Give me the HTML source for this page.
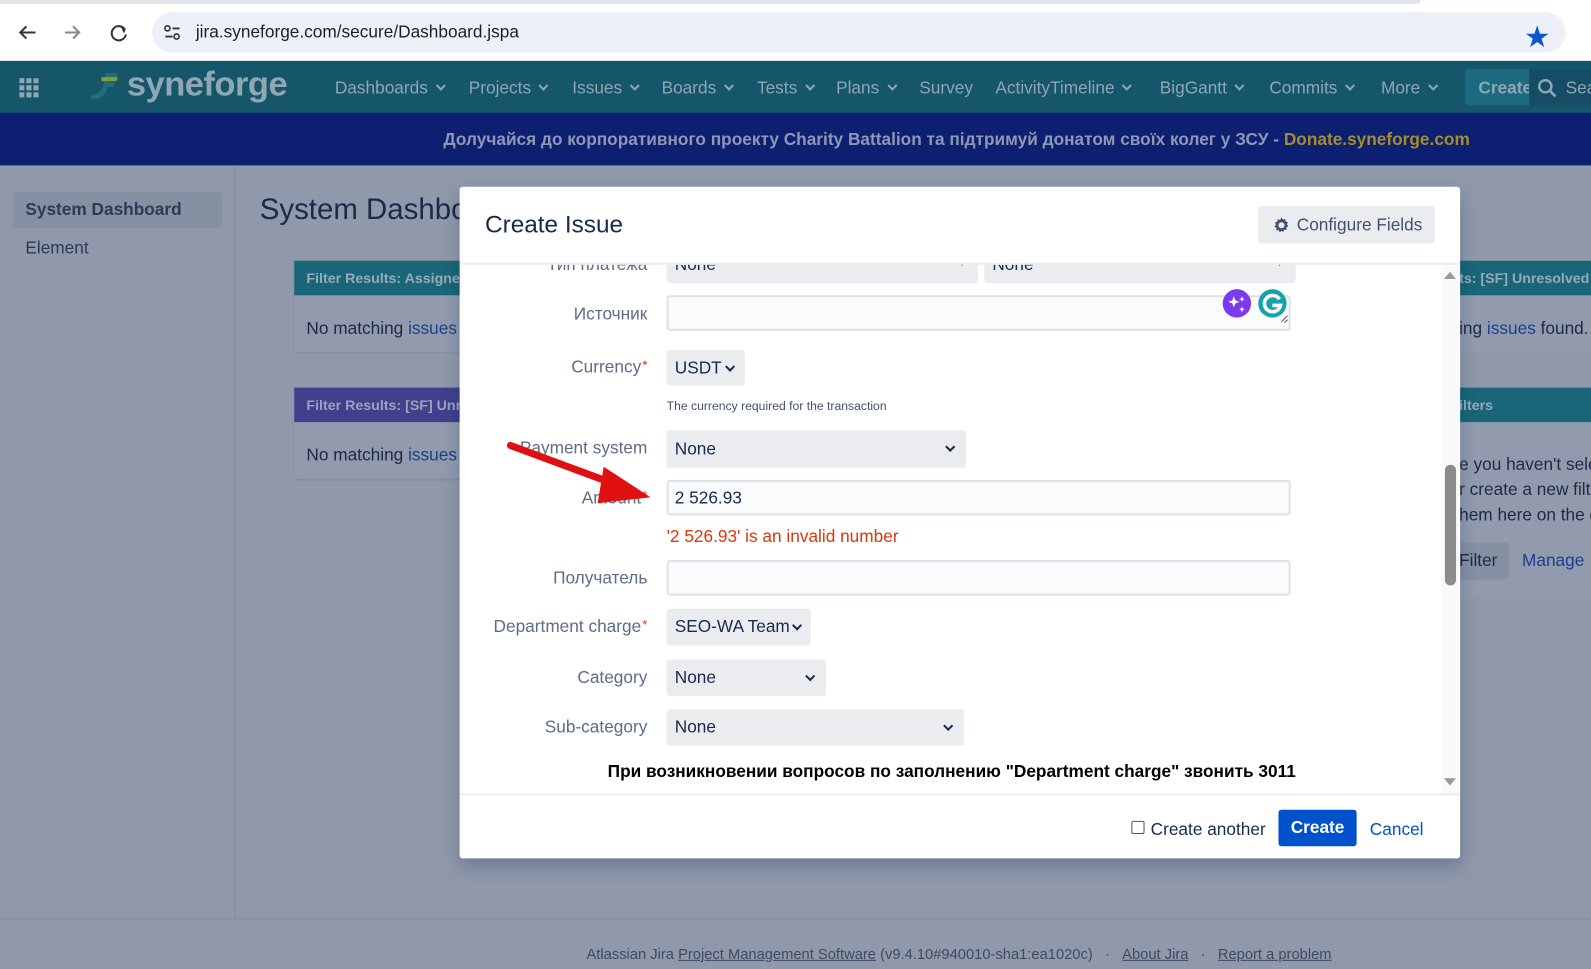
<!DOCTYPE html>
<html><head><meta charset="utf-8">
<style>
*{box-sizing:border-box;margin:0;padding:0}
html,body{width:1591px;height:969px;overflow:hidden;background:#8f99aa;font-family:"Liberation Sans","Noto Sans CJK SC",sans-serif}
#w{position:absolute;left:0;top:0;width:1568px;height:955px;transform:scale(1.01467);transform-origin:0 0;background:#8f99aa}
.a{position:absolute}
.nav span{position:absolute;top:77px;font-size:17px;color:#8fa6b3;white-space:nowrap}
.chev{display:inline-block;width:7px;height:7px;border-right:2px solid currentColor;border-bottom:2px solid currentColor;transform:rotate(45deg);margin-left:9px;position:relative;top:-4px}
.lbl{position:absolute;right:930px;font-size:17px;color:#5e6c84;text-align:right;white-space:nowrap}
.req{color:#de350b;font-size:13px;vertical-align:top;margin-left:1px}
.sel{position:absolute;background:#ebecf0;border-radius:3px;font-size:17px;color:#172b4d;padding-left:8px;line-height:36px;height:36px}
.sel .chev{position:absolute;right:12px;top:13px;margin:0;width:7px;height:7px;color:#172b4d}
.inp{position:absolute;left:657px;width:615px;height:36px;background:#fafbfc;border:2px solid #dfe1e6;border-radius:3px;font-size:17px;color:#172b4d;padding-left:6px;line-height:32px}
</style></head><body><div id="w">
<div class="a" style="left:0;top:0;width:1568px;height:60px;background:#fff"></div>
<div class="a" style="left:0;top:0;width:1400px;height:4px;background:#e1e5ea;border-radius:0 0 8px 0"></div>
<svg class="a" style="left:15px;top:20px" width="120" height="24" viewBox="0 0 120 24"><path d="M20 12H5M11 6l-6 6 6 6" stroke="#333" stroke-width="2" fill="none"/><path d="M49 12h14M57 6l6 6-6 6" stroke="#888" stroke-width="2" fill="none"/><path d="M108 9a7 7 0 1 0 1 5" stroke="#333" stroke-width="2" fill="none"/><path d="M104 6l5 3-2 4z" fill="#333"/></svg>
<div class="a" style="left:150px;top:12px;width:1393px;height:40px;background:#edf0f8;border-radius:20px"></div>
<svg class="a" style="left:160px;top:22px" width="20" height="20"><circle cx="5" cy="6" r="2.5" stroke="#333" stroke-width="1.6" fill="none"/><path d="M10 6h7M3 14h7" stroke="#333" stroke-width="1.8"/><circle cx="14" cy="14" r="2.5" stroke="#333" stroke-width="1.6" fill="none"/></svg>
<div class="a" style="left:193px;top:22px;font-size:17px;color:#1f1f1f">jira.syneforge.com/secure/Dashboard.jspa</div>
<div class="a" style="left:1503px;top:17px;font-size:24px;color:#0b57d0">★</div>
<div class="a" style="left:0;top:60px;width:1568px;height:51px;background:#15566b"></div>
<svg class="a" style="left:19px;top:77px" width="22" height="20"><g fill="#8fa6b3"><rect x="0" y="0" width="5" height="5"/><rect x="7" y="0" width="5" height="5"/><rect x="14" y="0" width="5" height="5"/><rect x="0" y="7" width="5" height="5"/><rect x="7" y="7" width="5" height="5"/><rect x="14" y="7" width="5" height="5"/><rect x="0" y="14" width="5" height="5"/><rect x="7" y="14" width="5" height="5"/><rect x="14" y="14" width="5" height="5"/></g></svg>
<svg class="a" style="left:86px;top:68px" width="36" height="36"><path d="M4 26c6 0 10-4 12-10l2-12h12l-1 5h-7l-1 4h6l-1 5h-6c-2 8-7 12-16 12z" fill="#1e6f79"/><path d="M14 8h16l-1 4H14z" fill="#8a9a3a"/></svg>
<div class="a" style="left:125px;top:64px;font-size:34px;font-weight:bold;color:#8fa6b3;letter-spacing:-0.5px">syneforge</div>
<div class="nav">
<span style="left:330px">Dashboards<i class="chev"></i></span>
<span style="left:462px">Projects<i class="chev"></i></span>
<span style="left:564px">Issues<i class="chev"></i></span>
<span style="left:652px">Boards<i class="chev"></i></span>
<span style="left:746px">Tests<i class="chev"></i></span>
<span style="left:824px">Plans<i class="chev"></i></span>
<span style="left:906px">Survey</span>
<span style="left:981px">ActivityTimeline<i class="chev"></i></span>
<span style="left:1143px">BigGantt<i class="chev"></i></span>
<span style="left:1251px">Commits<i class="chev"></i></span>
<span style="left:1361px">More<i class="chev"></i></span>
</div>
<div class="a" style="left:1444px;top:68px;width:124px;height:36px;background:#1a6a80;border-radius:3px"></div>
<div class="a" style="left:1457px;top:77px;font-size:17px;font-weight:bold;color:#8fa6b3">Create</div>
<div class="a" style="left:1507px;top:68px;width:61px;height:36px;background:#164d66"></div>
<svg class="a" style="left:1515px;top:77px" width="20" height="20"><circle cx="8" cy="8" r="6" stroke="#8fa6b3" stroke-width="2.4" fill="none"/><path d="M12 12l6 6" stroke="#8fa6b3" stroke-width="2.6"/></svg>
<div class="a" style="left:1543px;top:77px;font-size:17px;color:#8fa6b3">Sea</div>
<div class="a" style="left:0;top:111px;width:1568px;height:52px;background:#0d1f70"></div>
<div class="a" style="left:437px;top:128px;font-size:17px;font-weight:bold;color:#8e97b4;white-space:nowrap">Долучайся до корпоративного проекту Charity Battalion та підтримуй донатом своїх колег у ЗСУ - <span style="color:#a58e2a">Donate.syneforge.com</span></div>
<div class="a" style="left:231px;top:163px;width:1px;height:742px;background:#818ba0"></div>
<div class="a" style="left:13px;top:189px;width:206px;height:36px;background:#8690a3;border-radius:3px"></div>
<div class="a" style="left:25px;top:197px;font-size:17px;font-weight:bold;color:#2d3a57">System Dashboard</div>
<div class="a" style="left:25px;top:235px;font-size:17px;color:#2d3a57">Element</div>
<div class="a" style="left:256px;top:191px;font-size:29px;color:#172b4d">System Dashbo</div>
<div class="a" style="left:290px;top:257px;width:170px;height:90px;background:#919bad;box-shadow:0 1px 2px #7d879a"></div>
<div class="a" style="left:290px;top:257px;width:170px;height:34px;background:#196679"></div>
<div class="a" style="left:302px;top:266px;font-size:14px;font-weight:bold;color:#9aa9b8">Filter Results: Assigned</div>
<div class="a" style="left:302px;top:314px;font-size:17px;color:#1e2a44">No matching <span style="color:#1c3f8f">issues</span></div>
<div class="a" style="left:290px;top:382px;width:170px;height:90px;background:#919bad;box-shadow:0 1px 2px #7d879a"></div>
<div class="a" style="left:290px;top:382px;width:170px;height:34px;background:#433f8d"></div>
<div class="a" style="left:302px;top:391px;font-size:14px;font-weight:bold;color:#9aa2bc">Filter Results: [SF] Unr</div>
<div class="a" style="left:302px;top:439px;font-size:17px;color:#1e2a44">No matching <span style="color:#1c3f8f">issues</span></div>
<div class="a" style="left:1438px;top:257px;width:130px;height:90px;background:#919bad"></div>
<div class="a" style="left:1438px;top:257px;width:130px;height:34px;background:#196679"></div>
<div class="a" style="left:1438px;top:266px;font-size:14px;font-weight:bold;color:#9aa9b8;white-space:nowrap">ts: [SF] Unresolved</div>
<div class="a" style="left:1438px;top:314px;font-size:17px;color:#1e2a44;white-space:nowrap">ing <span style="color:#1c3f8f">issues</span> found.</div>
<div class="a" style="left:1438px;top:382px;width:130px;height:206px;background:#919bad"></div>
<div class="a" style="left:1438px;top:382px;width:130px;height:34px;background:#196679"></div>
<div class="a" style="left:1438px;top:391px;font-size:14px;font-weight:bold;color:#9aa9b8">ilters</div>
<div class="a" style="left:1438px;top:445px;font-size:17px;color:#1e2a44;line-height:25px;white-space:nowrap">e you haven't sele<br>r create a new filt<br>hem here on the d</div>
<div class="a" style="left:1438px;top:535px;width:49px;height:36px;background:#8690a3;border-radius:3px"></div>
<div class="a" style="left:1438px;top:543px;font-size:17px;color:#1e2a44">Filter</div>
<div class="a" style="left:1500px;top:543px;font-size:17px;color:#1c3f8f">Manage</div>
<div class="a" style="left:0;top:905px;width:1568px;height:1px;background:#818ba0"></div>
<div class="a" style="left:578px;top:933px;font-size:14.5px;color:#3d4a63;white-space:nowrap">Atlassian Jira <u>Project Management Software</u> (v9.4.10#940010-sha1:ea1020c) &nbsp;&nbsp;· &nbsp;&nbsp;<u>About Jira</u> &nbsp;&nbsp;· &nbsp;&nbsp;<u>Report a problem</u></div>
<div class="a" style="left:453px;top:184px;width:986px;height:662px;background:#fff;border-radius:3px;box-shadow:0 8px 16px rgba(9,30,66,.25)"></div>
<div class="a" style="left:478px;top:208px;font-size:24px;color:#172b4d">Create Issue</div>
<div class="a" style="left:1240px;top:203px;width:174px;height:37px;background:#ebecf0;border-radius:3px"></div>
<svg class="a" style="left:1254px;top:213px" width="18" height="18" viewBox="0 0 18 18"><path d="M9 1.5l1.4 2 2.3-.7.3 2.4 2.3.8-1 2.1 1.6 1.8-2.1 1.2.2 2.4-2.4-.1-1 2.2L9 14.4l-1.8 1.6-1-2.2-2.4.1.2-2.4-2.1-1.2L3.5 8.4l-1-2.1 2.3-.8.3-2.4 2.3.7z" fill="#42526e"/><circle cx="9" cy="9" r="3" fill="#ebecf0"/></svg>
<div class="a" style="left:1278px;top:212px;font-size:17px;color:#42526e">Configure Fields</div>
<div class="a" style="left:453px;top:259px;width:986px;height:2px;background:#ebecf0"></div>
<div class="a" style="left:453px;top:261px;width:986px;height:522px;overflow:hidden">
  <div class="a" style="right:801px;top:-10px;font-size:17px;color:#5e6c84;white-space:nowrap">Тип платежа</div>
  <div class="sel" style="left:204px;top:-16px;width:307px;height:34px;line-height:32px">None<i class="chev" style="top:12px;border-width:0;border-top:5px solid #172b4d;border-left:4px solid transparent;border-right:4px solid transparent;transform:none;width:0;height:0"></i></div>
  <div class="sel" style="left:517px;top:-16px;width:307px;height:34px;line-height:32px">None<i class="chev" style="top:12px;border-width:0;border-top:5px solid #172b4d;border-left:4px solid transparent;border-right:4px solid transparent;transform:none;width:0;height:0"></i></div>
</div>
<div class="lbl" style="top:300px">Источник</div>
<div class="inp" style="top:291px;height:35px"></div>
<svg class="a" style="left:1203px;top:284px" width="68" height="42"><circle cx="16" cy="15" r="14" fill="#7c3aed"/><path d="M13 8l1.5 4 4 1.5-4 1.5-1.5 4-1.5-4-4-1.5 4-1.5zM21 8l.8 2 2 .8-2 .8-.8 2-.8-2-2-.8 2-.8zM21 18l.8 2 2 .8-2 .8-.8 2-.8-2-2-.8 2-.8z" fill="#fff"/><circle cx="51" cy="15" r="14" fill="#15a3a8"/><path d="M58 11a8 8 0 1 0 1 6h-8" stroke="#fff" stroke-width="3.5" fill="none"/><path d="M60 33l6-6M63 34l3-3" stroke="#555" stroke-width="1"/></svg>
<div class="lbl" style="top:352px">Currency<span class="req">*</span></div>
<div class="sel" style="left:657px;top:345px;width:77px;height:35px">USDT<i class="chev" style="right:11px"></i></div>
<div class="a" style="left:657px;top:393px;font-size:12px;color:#42526e">The currency required for the transaction</div>
<div class="lbl" style="top:432px">Payment system</div>
<div class="sel" style="left:657px;top:424px;width:295px;height:37px;line-height:37px">None<i class="chev"></i></div>
<div class="lbl" style="top:481px">Amount<span class="req">*</span></div>
<div class="inp" style="top:473px;height:35px">2 526.93</div>
<div class="a" style="left:657px;top:519px;font-size:17px;color:#de350b">'2 526.93' is an invalid number</div>
<div class="lbl" style="top:560px">Получатель</div>
<div class="inp" style="top:552px;height:35px"></div>
<div class="lbl" style="top:608px">Department charge<span class="req">*</span></div>
<div class="sel" style="left:657px;top:600px;width:142px;height:36px">SEO-WA Team<i class="chev" style="right:10px"></i></div>
<div class="lbl" style="top:658px">Category</div>
<div class="sel" style="left:657px;top:650px;width:157px;height:36px">None<i class="chev"></i></div>
<div class="lbl" style="top:707px">Sub-category</div>
<div class="sel" style="left:657px;top:699px;width:293px;height:36px">None<i class="chev"></i></div>
<div class="a" style="left:453px;top:751px;width:970px;text-align:center;font-size:17px;font-weight:bold;color:#000">При возникновении вопросов по заполнению "Department charge" звонить 3011</div>
<div class="a" style="left:1421px;top:262px;width:17px;height:521px;background:#fafafa"></div>
<div class="a" style="left:1423px;top:268px;width:0;height:0;border-left:6px solid transparent;border-right:6px solid transparent;border-bottom:7px solid #9a9a9a"></div>
<div class="a" style="left:1423px;top:767px;width:0;height:0;border-left:6px solid transparent;border-right:6px solid transparent;border-top:7px solid #9a9a9a"></div>
<div class="a" style="left:1424px;top:458px;width:11px;height:119px;background:#8c8c8c;border-radius:6px"></div>
<div class="a" style="left:453px;top:782px;width:986px;height:2px;background:#ebecf0"></div>
<div class="a" style="left:1115px;top:809px;width:13px;height:13px;border:1px solid #555;border-radius:2px;background:#fff"></div>
<div class="a" style="left:1134px;top:808px;font-size:17px;color:#172b4d">Create another</div>
<div class="a" style="left:1260px;top:798px;width:77px;height:36px;background:#0052cc;border-radius:3px;color:#fff;font-size:17px;font-weight:bold;text-align:center;line-height:36px">Create</div>
<div class="a" style="left:1350px;top:808px;font-size:17px;color:#0052cc">Cancel</div>
<svg class="a" style="left:495px;top:430px" width="160" height="75"><path d="M8 9 L108 46" stroke="#e01010" stroke-width="7" stroke-linecap="round"/><polygon points="100,30 146,60 94,66" fill="#e01010"/></svg>
</div></body></html>
